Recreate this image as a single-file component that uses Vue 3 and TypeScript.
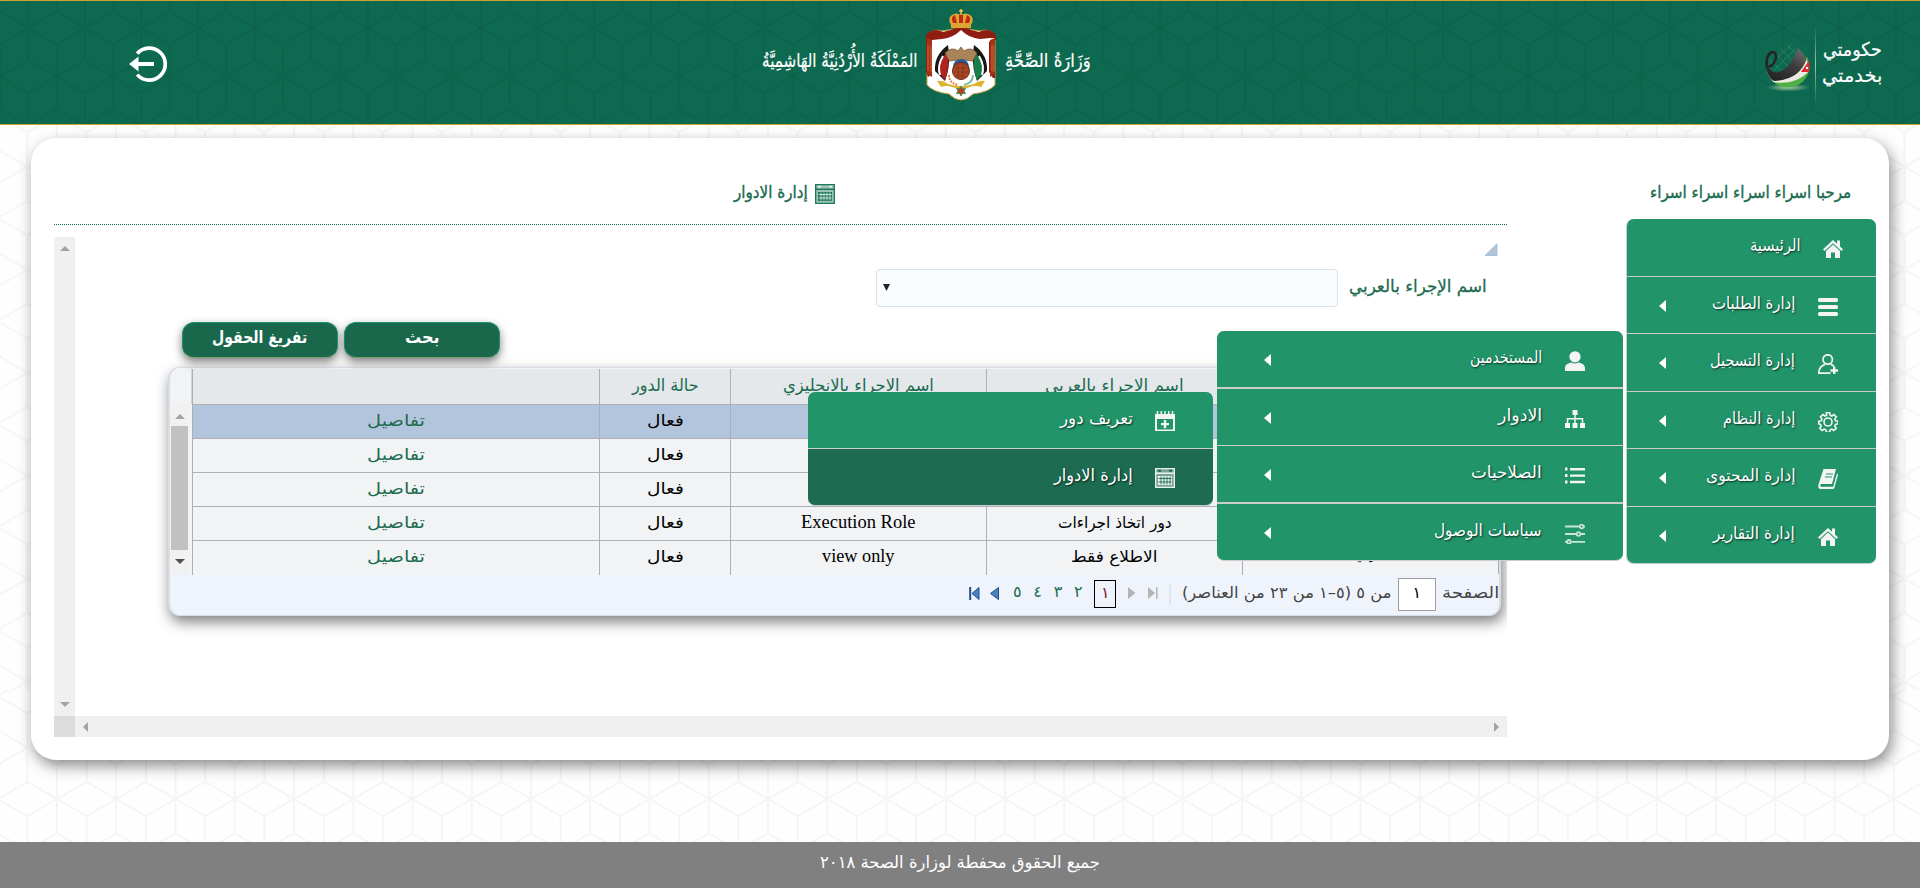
<script setup lang="ts">
import { defineComponent, h, type ObjectDirective } from 'vue'

interface MenuItem {
  label: string
  width: number
  icon: string
  arrow?: boolean
  active?: boolean
}

interface Row {
  arabic: string
  arabicWidth: number
  english: string
  englishWidth: number
  extra?: string
}

/* Condenses a label horizontally so that it takes exactly the given width. */
const vFit: ObjectDirective<HTMLElement, number> = {
  mounted(el, { value }) {
    const natural = el.offsetWidth
    if (!natural) return
    el.style.transform = `scaleX(${value / natural})`
    el.style.marginLeft = `${value - natural}px`
  },
}

const shapes: Record<string, string> = {
  home: '<path d="M10 1 0 10.3l1.5 1.6L10 4.2l8.500 7.700 1.500-1.600-3-2.800V1.500h-3v3.200z"/><path d="M10 5.600 3 12v7h5v-5.500h4V19h5v-7z"/>',
  bars: '<rect y="1" width="20" height="4" rx="1.500"/><rect y="8" width="20" height="4" rx="1.500"/><rect y="15" width="20" height="4" rx="1.500"/>',
  userAdd: '<g fill="none" stroke="#f4f4f4" stroke-width="1.700"><circle cx="9.700" cy="5.500" r="4.700"/><path d="M12.500 19.200H.8c0-5 2.500-7.500 6-8.600M12.500 10.300c1.500.5 2.800 1.300 3.800 2.500"/></g><path d="M15 13h2.400v2.300H20v2.400h-2.600V20H15v-2.300h-2.500v-2.400H15z"/>',
  gear: '<g fill="none" stroke="#f4f4f4" stroke-width="1.600"><path d="M8.300.8h3.400l.5 2.500 1.600.7 2.100-1.500 2.400 2.400-1.500 2.200.7 1.600 2.500.4v2.800l-2.500.5-.7 1.700 1.500 2.100-2.400 2.300-2.100-1.400-1.600.7-.5 2.400H8.300l-.5-2.400-1.600-.7-2.100 1.400-2.400-2.300 1.500-2.100-.7-1.700L.8 11.900V9.100l2.500-.4L4 7.100 2.500 4.900 4.900 2.500 7 4l1.600-.7z"/><circle cx="10" cy="10" r="4"/></g>',
  book: '<path d="M5.500 0H18l-4 15H3.200c-1.200 0-1.200 2.700 0 2.700h12L19 4.500c1 .3 1 1 .8 1.900L16.500 18.500q-.5 1.500-2 1.500H2.500Q0 20 .3 16z"/><path d="M8 5h7M7 8h7" stroke="#21946a" stroke-width="1.200"/>',
  user: '<circle cx="10" cy="5.800" r="5.600"/><path d="M0 20v-3c0-3 3-5 6.500-5.500q3.500 1.800 7 0C17 12 20 14 20 17v3z"/>',
  tree: '<path d="M7.500 1h5v5h-5zM0 14h5v5H0zM7.500 14h5v5h-5zM15 14h5v5h-5z"/><path d="M10 6v8M2.500 14V9.800h15V14" fill="none" stroke="#f4f4f4" stroke-width="1.500"/>',
  list: '<path d="M0 1.500h2.500v3H0zM5 2h15v2.400H5zM0 8h2.500v3H0zM5 8.400h15v2.400H5zM0 14.500h2.500v3H0zM5 14.800h15v2.400H5z"/>',
  sliders: '<g fill="none" stroke="#c9e5da" stroke-width="1.800"><path d="M0 2.500h14.500M0 10h11.500M15.500 10H20M0 17.800h2M6.500 17.800H20M18.800 2.500H20"/><circle cx="16.700" cy="2.500" r="1.800"/><circle cx="13.500" cy="10" r="1.800"/><circle cx="4" cy="17.800" r="1.800"/></g>',
  calAdd: '<path d="M0 3h20v17H0zM2 8v10.500h16V8z" fill-rule="evenodd"/><path d="M2.500 0v6M6.300 0v6M10 0v6M13.700 0v6M17.500 0v6" stroke="#f4f4f4" stroke-width="1.500"/><path d="M8.800 9h2.400v3H14v2.300h-2.800v3H8.800v-3H6V12h2.800z"/>',
}

const calendar =
  '<rect width="20" height="20" fill="FG" opacity=".45"/><path d="M0 0h20v20H0zM1.300 1.300v3.200h17.400V1.300zM1.300 6v12.700h17.400V6z" fill="FG" fill-rule="evenodd"/><path d="M3 2.800h3M14 2.800h3" stroke="BG" stroke-width="2"/><rect x="3" y="8" width="14" height="9" fill="FG"/><path d="M3.500 10.500h13M3.500 14h13M6 8.500v8M9 8.500v8M12 8.500v8M15 8.500v8" stroke="BG" stroke-width=".9"/>'
shapes.calendar = calendar.replace(/FG/g, '#e8f0ec').replace(/BG/g, '#1d6b51')
shapes.calendarGreen = calendar.replace(/FG/g, '#1f7a5a').replace(/BG/g, '#d5e9e1')

const Icon = defineComponent({
  props: { name: { type: String, required: true } },
  setup(props) {
    return () =>
      h('svg', { viewBox: '0 0 20 20', width: 20, height: 20, fill: '#f4f4f4', innerHTML: shapes[props.name] })
  },
})

const mainMenu: MenuItem[] = [
  { label: 'الرئيسية', width: 51, icon: 'home' },
  { label: 'إدارة الطلبات', width: 83, icon: 'bars', arrow: true },
  { label: 'إدارة التسجيل', width: 85, icon: 'userAdd', arrow: true },
  { label: 'إدارة النظام', width: 72, icon: 'gear', arrow: true },
  { label: 'إدارة المحتوى', width: 89, icon: 'book', arrow: true },
  { label: 'إدارة التقارير', width: 82, icon: 'home', arrow: true },
]

const systemMenu: MenuItem[] = [
  { label: 'المستخدمين', width: 72, icon: 'user', arrow: true },
  { label: 'الادوار', width: 44, icon: 'tree', arrow: true },
  { label: 'الصلاحيات', width: 71, icon: 'list', arrow: true },
  { label: 'سياسات الوصول', width: 108, icon: 'sliders', arrow: true },
]

const rolesMenu: MenuItem[] = [
  { label: 'تعريف دور', width: 73, icon: 'calAdd' },
  { label: 'إدارة الادوار', width: 79, icon: 'calendar', active: true },
]

const rows: Row[] = [
  { arabic: '', arabicWidth: 0, english: '', englishWidth: 0 },
  { arabic: '', arabicWidth: 0, english: '', englishWidth: 0 },
  { arabic: '', arabicWidth: 0, english: '', englishWidth: 0 },
  { arabic: 'دور اتخاذ اجراءات', arabicWidth: 114, english: 'Execution Role', englishWidth: 114 },
  { arabic: 'الاطلاع فقط', arabicWidth: 86, english: 'view only', englishWidth: 73, extra: 'عربي' },
]

const pages = ['٢', '٣', '٤', '٥']
</script>

<template>
  <div class="page" dir="rtl">
    <svg class="backdrop" width="1920" height="888" aria-hidden="true">
      <defs>
        <pattern id="hexTop" x="27.300" y="166.600" width="59.250" height="103" patternUnits="userSpaceOnUse">
          <path class="hex" d="M0 0 29.600 17.200 59.250 0M0 0V34.300M0 103V68.700M59.250 0V34.300M59.250 103V68.700M29.600 17.200V85.800M0 34.300 29.600 51.500 0 68.700M59.250 34.300 29.600 51.500 59.250 68.700M0 103 29.600 85.800 59.250 103" />
        </pattern>
        <pattern id="hexRight" x="1904.300" y="166.600" width="59.250" height="103" patternUnits="userSpaceOnUse">
          <path class="hex" d="M0 0 29.600 17.200 59.250 0M0 0V34.300M0 103V68.700M59.250 0V34.300M59.250 103V68.700M29.600 17.200V85.800M0 34.300 29.600 51.500 0 68.700M59.250 34.300 29.600 51.500 59.250 68.700M0 103 29.600 85.800 59.250 103" />
        </pattern>
        <pattern id="hexBottom" x="57" y="799" width="59.250" height="103" patternUnits="userSpaceOnUse">
          <path class="hex" d="M0 0 29.600 17.200 59.250 0M0 0V34.300M0 103V68.700M59.250 0V34.300M59.250 103V68.700M29.600 17.200V85.800M0 34.300 29.600 51.500 0 68.700M59.250 34.300 29.600 51.500 59.250 68.700M0 103 29.600 85.800 59.250 103" />
        </pattern>
        <pattern id="hexHeader" x="28.200" y="28" width="56.600" height="97.400" patternUnits="userSpaceOnUse">
          <path class="hex dark" d="M0 0 28.300 16.300 56.600 0M0 0V32.500M0 97.400V65M56.600 0V32.500M56.600 97.400V65M28.300 16.300V81.100M0 32.500 28.300 48.700 0 65M56.600 32.500 28.300 48.700 56.600 65M0 97.400 28.300 81.100 56.600 97.400" />
        </pattern>
      </defs>
      <rect y="125" width="1885" height="565" fill="url(#hexTop)" />
      <rect x="1885" y="125" width="35" height="565" fill="url(#hexRight)" />
      <rect y="690" width="1920" height="152" fill="url(#hexBottom)" />
      <rect width="1920" height="125" fill="#0d694f" />
      <rect width="1920" height="125" fill="url(#hexHeader)" />
    </svg>

    <header class="header">
      <div class="gov">
        <div class="gov-text">
          <div><span v-fit="59">حكومتي</span></div>
          <div><span v-fit="60">بخدمتي</span></div>
        </div>
        <div class="gov-line"></div>
        <svg class="globe" width="48" height="48" viewBox="0 0 48 48">
          <defs>
            <clipPath id="ball"><circle cx="24" cy="22" r="21.500" /></clipPath>
            <linearGradient id="coal" x1="0" y1="1" x2="1" y2="0">
              <stop offset="0" stop-color="#1c1c1c" /><stop offset=".6" stop-color="#3d3d3d" /><stop offset="1" stop-color="#777" />
            </linearGradient>
            <radialGradient id="glow"><stop offset="0" stop-color="#b5d8a8" stop-opacity=".9" /><stop offset="1" stop-color="#b5d8a8" stop-opacity="0" /></radialGradient>
          </defs>
          <ellipse cx="24" cy="43.500" rx="22" ry="4" fill="url(#glow)" />
          <g clip-path="url(#ball)">
            <path d="M12 0 42 30M20-2 46 24M6 4 36 34M2 12 24 34M36 0 8 28M42 4 14 34M28 0 4 22" stroke="#3f8a71" stroke-width=".6" fill="none" />
            <path d="M0 30Q30 34 44 12L48 48H0z" fill="#4fae45" />
            <path d="M0 28Q28 32 42 14L46 26Q32 42 8 38z" fill="#eceadf" />
            <path d="M0 12Q4 30 14 28 26 26 34 4L43 14Q36 36 10 37L-2 30z" fill="url(#coal)" />
            <path d="M46 15 37 28 47 28z" fill="#e3282b" />
          </g>
          <circle cx="43" cy="24" r="1.200" fill="#fff" />
          <path d="M3 24C1 10 8 6 11 9q3 4-2 11-3 3-5 2" fill="none" stroke="#252525" stroke-width="2.600" />
        </svg>
      </div>

      <div class="brand">
        <div class="script"><span v-fit="86">وَزَارَةُ الصِّحَّةِ</span></div>
        <svg class="emblem" width="72" height="94" viewBox="0 0 72 94">
          <path d="M2 27Q8 20 17 23L36 20 55 23Q64 20 70 27V77Q64 84 48 86 42 92 36 92 30 92 24 86 8 84 2 77z" fill="#fff" stroke="#c9a33a" />
          <path d="M1 27Q8 19 18 24 27 22 36 18 45 22 54 24 64 19 71 27V32Q66 31 64 34V64L68 70H70V30H65L55 31Q44 30 36 22 28 30 17 31L7 32V66L3 69 1 64z" fill="#8f1d12" />
          <path d="M2 30V66L7 69V32zM70 30V66L65 69V32z" fill="#a8301b" />
          <path d="M3 37v26M6 38v26M67 37v26M69 38v26" stroke="#d4783a" stroke-width=".8" />
          <path d="M23 37Q9 47 10 63l10 10Q25 60 24 45z" fill="#171717" />
          <path d="M49 37Q63 47 62 63L52 73Q47 60 48 45z" fill="#171717" />
          <path d="M22 44Q14 52 15 66l5 6Q25 60 22 44z" fill="#b32020" /><path d="M50 44Q58 52 57 66l-5 6Q47 60 50 44z" fill="#168046" />
          <path d="M18 48Q12 58 15 67M54 48Q60 58 57 67" stroke="#fff" stroke-width="2" fill="none" />
          <path d="M20 45Q27 38 33 43L36 39 39 43Q46 38 52 45L48 53 39 52 36 56 33 52 24 53z" fill="#a98458" stroke="#6c4c24" stroke-width=".7" />
          <circle cx="36" cy="59" r="8" fill="#265a9b" />
          <path d="M24 67q0 8 9 10" fill="none" stroke="#e97e3c" stroke-width="2" stroke-dasharray="2 1" /><path d="M48 67q0 8-9 10" fill="none" stroke="#80bd9b" stroke-width="2" />
          <circle cx="36" cy="63" r="8.500" fill="#a84724" stroke="#6d2514" />
          <path d="M30 60h12M29 64h14M32 68h8M33 56v14M38 56v14" stroke="#7b2b14" stroke-width=".6" />
          <path d="M12 73Q18 72 23 76 36 80 49 76 54 72 60 73L56 79Q50 77 45 79 36 82 27 79 22 77 16 79z" fill="#dcb52e" />
          <path d="M36 88l1.500 2.500h3L39 93l1.500 2.500h-3L36 98l-1.500-2.500h-3L33 93l-1.500-2.500h3z" fill="#b54125" stroke="#3b9d5c" transform="translate(0 -10)" />
          <path d="M26 17Q22 10 27 7 31 4 36 7 41 4 45 7 50 10 46 17z" fill="#e2a431" />
          <path d="M28 15Q25 9 30 7l2 8zM34 15V7h4v8zM44 15Q47 9 42 7l-2 8z" fill="#c02b17" />
          <path d="M26 16h20v4H26z" fill="#dda630" /><path d="M36 1v6M34 3h4" stroke="#f0c64e" stroke-width="1.500" />
        </svg>
        <div class="script"><span v-fit="155">المَمْلَكَةُ الأُرْدُنِيَّةُ الهَاشِمِيَّةُ</span></div>
      </div>

      <svg class="logout" width="40" height="40" viewBox="0 0 40 40">
        <path d="M8.200 8.600A16 16 0 1 1 8.200 29.600" fill="none" stroke="#fff" stroke-width="3.700" />
        <path d="M0 19 9.500 11.500V17H25V21H9.500V26.500z" fill="#fff" />
      </svg>
    </header>

    <main class="card">
      <aside class="side">
        <div class="welcome"><span v-fit="201">مرحبا اسراء اسراء اسراء اسراء</span></div>
        <nav class="menu main-menu">
          <a v-for="item in mainMenu" :key="item.label" class="item" :class="{ leaf: !item.arrow }">
            <Icon class="item-icon" :name="item.icon" />
            <b class="item-label"><span v-fit="item.width">{{ item.label }}</span></b>
            <i v-if="item.arrow" class="caret"></i>
          </a>
        </nav>
      </aside>

      <section class="content">
        <h1 class="title">
          <Icon name="calendarGreen" />
          <span v-fit="74">إدارة الادوار</span>
        </h1>

        <div class="frame">
          <div class="vbar"><i class="up"></i><i class="down"></i></div>
          <div class="view">
            <svg class="corner" width="14" height="14" viewBox="0 0 14 14"><path d="M13 .8V12.500H1z" fill="#b5c4d4" stroke="#a2c1e0" /></svg>
            <div class="filter">
              <label><span v-fit="138">اسم الإجراء بالعربي</span></label>
              <div class="select"><svg width="8" height="8"><path d="M0 0h7L3.500 7z" fill="#222" /></svg></div>
            </div>
            <div class="actions">
              <button type="button"><span v-fit="35">بحث</span></button>
              <button type="button"><span v-fit="95">تفريغ الحقول</span></button>
            </div>

            <div class="grid">
              <div class="grid-body">
                <div class="cells">
                  <div class="tr head">
                    <div></div>
                    <div><span v-fit="139">اسم الاجراء بالعربي</span></div>
                    <div><span v-fit="151">اسم الاجراء بالانجليزي</span></div>
                    <div><span v-fit="67">حالة الدور</span></div>
                    <div></div>
                  </div>
                  <div v-for="(row, index) in rows" :key="index" class="tr" :class="{ selected: index === 0 }">
                    <div class="extra"><span v-if="row.extra" v-fit="30">{{ row.extra }}</span></div>
                    <div><span v-if="row.arabic" v-fit="row.arabicWidth">{{ row.arabic }}</span></div>
                    <div class="latin"><span v-if="row.english" v-fit="row.englishWidth">{{ row.english }}</span></div>
                    <div><span v-fit="37">فعال</span></div>
                    <div class="link"><span v-fit="58">تفاصيل</span></div>
                  </div>
                </div>
                <div class="grid-bar">
                  <div class="grid-bar-head"></div>
                  <div class="track"><i class="up"></i><i class="thumb"></i><i class="down dark"></i></div>
                </div>
              </div>
              <div class="pager">
                <span v-fit="57">الصفحة</span>
                <div class="page-input">١</div>
                <span v-fit="209">من ٥ (٥–١ من ٢٣ من العناصر)</span>
                <i class="divider"></i>
                <svg class="last" width="10" height="12"><path d="M0 0 7 6 0 12zM8 0h1.500v12H8z" fill="#b4b4b4" /></svg>
                <svg class="next" width="8" height="12"><path d="M0 0 7.500 6 0 12z" fill="#b4b4b4" /></svg>
                <div class="current">١</div>
                <a v-for="p in pages" :key="p" class="num">{{ p }}</a>
                <svg class="prev" width="9" height="13"><path d="M8.500.5v12L.5 6.500z" fill="#4b82bd" stroke="#1d4f8c" /></svg>
                <svg class="first" width="11" height="13"><path d="M10 .5v12L3 6.500z" fill="#4b82bd" stroke="#1d4f8c" /><path d="M1.200 0v13" stroke="#1d4f8c" stroke-width="2" /></svg>
              </div>
            </div>
          </div>
          <div class="resizer"></div>
          <div class="hbar"><i class="right"></i><i class="left"></i></div>
        </div>
      </section>
    </main>

    <nav class="menu flyout system-menu">
      <a v-for="item in systemMenu" :key="item.label" class="item">
        <Icon class="item-icon" :name="item.icon" />
        <b class="item-label"><span v-fit="item.width">{{ item.label }}</span></b>
        <i class="caret"></i>
      </a>
    </nav>
    <nav class="menu flyout roles-menu">
      <a v-for="item in rolesMenu" :key="item.label" class="item" :class="{ active: item.active }">
        <Icon class="item-icon" :name="item.icon" />
        <b class="item-label"><span v-fit="item.width">{{ item.label }}</span></b>
      </a>
    </nav>

    <footer class="footer"><span v-fit="280">جميع الحقوق محفطة لوزارة الصحة ٢٠١٨</span></footer>
  </div>
</template>

<style>
html,
body {
  margin: 0;
  overflow: hidden;
  background: #fefefe;
}
</style>

<style scoped>
* {
  box-sizing: border-box;
}
.page {
  position: relative;
  display: flex;
  flex-direction: column;
  height: 888px;
  font: 16px/24px 'DejaVu Sans', 'Noto Sans', sans-serif;
  color: #000;
}
span {
  display: inline-block;
  flex-shrink: 0;
  white-space: nowrap;
  transform-origin: right center;
}
svg {
  display: block;
  flex-shrink: 0;
}
.backdrop {
  position: absolute;
  inset: 0;
}
.hex {
  fill: none;
  stroke: #f5f5f5;
  stroke-width: 2;
}
.hex.dark {
  stroke: #0d634b;
}

.header {
  position: relative;
  display: flex;
  justify-content: space-between;
  height: 125px;
  border-top: 1px solid #cda32e;
  border-bottom: 1px solid #cda32e;
  color: #fff;
}
.gov {
  display: flex;
  width: 400px;
  padding-right: 38px;
}
.gov-text {
  width: 60px;
  padding-top: 35px;
  font-size: 19px;
  line-height: 26px;
  -webkit-text-stroke: 0.2px #fff;
}
.gov-line {
  width: 1px;
  height: 80px;
  margin: 24px 6px 0 3px;
  background: linear-gradient(transparent, #9cc4b6 50%, transparent);
}
.globe {
  margin-top: 43px;
}
.brand {
  display: flex;
  align-items: flex-start;
  margin-left: -66px;
}
.script {
  padding-top: 45px;
  font-size: 19px;
  line-height: 28px;
  -webkit-text-stroke: 0.2px #fff;
}
.emblem {
  margin: 7px 8px 0;
}
.logout {
  margin: 44px 230px 0 129px;
}

.card {
  position: relative;
  display: flex;
  width: 1858px;
  height: 622px;
  margin: 13px 31px 0;
  background: #fff;
  border-radius: 25px;
  box-shadow: 3px 6px 15px rgba(0, 0, 0, 0.45);
}
.side {
  width: 263px;
  padding: 42px 13px 0 0;
}
.welcome {
  height: 39px;
  padding-right: 25px;
  color: #1b6b4f;
  font-size: 17px;
  -webkit-text-stroke: 0.4px #1b6b4f;
}
.menu {
  background: #ccc;
  border-radius: 7px;
}
.main-menu {
  width: 250px;
  padding-left: 1px;
  border-bottom: 1px solid #ccc;
}
.item {
  display: flex;
  height: 57.500px;
  padding-right: 38px;
  border-bottom: 1px solid #ccc;
  background: #21946a;
  color: #fff;
}
.item:first-child {
  border-radius: 7px 7px 0 0;
}
.item:last-child {
  height: 56px;
  border-bottom: 0;
  border-radius: 0 0 7px 7px;
}
.item.leaf {
  padding-right: 33px;
}
.item.active {
  background: #1d6b51;
}
.item-icon {
  margin-top: 20px;
}
.item-label {
  flex: 1;
  padding: 14px 23px 0 0;
  font-weight: 400;
  font-size: 17px;
  text-shadow: 1px 1px 2px rgba(0, 0, 0, 0.7);
}
.leaf .item-label {
  padding-right: 22px;
}
.caret {
  width: 0;
  height: 0;
  margin: 23px 0 0 32px;
  border: 6px solid transparent;
  border-right: 7px solid #fff;
  border-left: 0;
}
.flyout {
  position: absolute;
  border-bottom: 1px solid #ccc;
}
.system-menu {
  left: 1217px;
  top: 331px;
  width: 406px;
}
.system-menu .caret {
  margin-left: 47px;
}
.system-menu .item:nth-child(odd) {
  border-bottom-width: 2px;
}
.roles-menu {
  left: 808px;
  top: 392px;
  width: 405px;
}
.roles-menu .item:first-child {
  height: 57px;
}
.roles-menu .item-icon {
  margin-top: 19px;
}
.roles-menu .item-label {
  padding-right: 22px;
}

.content {
  width: 1453px;
  margin-right: 119px;
}
.title {
  display: flex;
  gap: 7px;
  height: 87px;
  margin: 0;
  padding: 42px 672px 0 0;
  border-bottom: 1px dotted #0d694f;
  color: #1b6b4f;
  font-weight: 400;
  font-size: 17px;
  -webkit-text-stroke: 0.4px #1b6b4f;
}
.title svg {
  margin-top: 4px;
  -webkit-text-stroke: 0;
}
.frame {
  display: grid;
  grid-template: 479px 21px / 1432px 21px;
  height: 500px;
  margin-top: 12px;
}
.view {
  grid-area: 1 / 1;
  padding-right: 6px;
  overflow: hidden;
}
.vbar {
  grid-area: 1 / 2;
  display: flex;
  flex-direction: column;
  justify-content: space-between;
  align-items: center;
  padding: 9px 0;
  background: #f0f0f0;
}
.hbar {
  grid-area: 2 / 1;
  display: flex;
  justify-content: space-between;
  align-items: center;
  padding: 0 8px;
  background: #f0f0f0;
}
.resizer {
  grid-area: 2 / 2;
  background: #dcdcdc;
}
.up,
.down,
.left,
.right {
  width: 0;
  height: 0;
  border: 5px solid transparent;
}
.up {
  border-top: 0;
  border-bottom-color: #a3a3a3;
}
.down {
  border-bottom: 0;
  border-top-color: #a3a3a3;
}
.down.dark {
  border-top-color: #505050;
}
.left {
  border-left: 0;
  border-right-color: #a3a3a3;
}
.right {
  border-right: 0;
  border-left-color: #a3a3a3;
}
.corner {
  margin: 6px 3px 0 0;
}
.filter {
  display: flex;
  gap: 11px;
  padding: 12px 14px 0 0;
}
.filter label {
  padding-top: 5px;
  color: #1b6b4f;
  font-size: 17px;
  -webkit-text-stroke: 0.3px #1b6b4f;
}
.select {
  display: flex;
  justify-content: flex-end;
  align-items: center;
  width: 462px;
  height: 38px;
  padding-left: 6px;
  border: 1px solid #dbe2e8;
  border-radius: 4px;
  background: #f9fdff;
}
.actions {
  display: flex;
  gap: 6px;
  justify-content: flex-end;
  padding: 15px 0 0 107px;
}
.actions button {
  width: 156px;
  height: 36px;
  padding: 0 0 6px;
  border: 1px solid #21946a;
  border-bottom-color: #7c9c70;
  border-radius: 12px;
  background: #1a684c;
  box-shadow: 0 4px 10px rgba(0, 0, 0, 0.5);
  color: #fff;
  font: bold 17px/24px 'DejaVu Sans', sans-serif;
}
.grid {
  width: 1333px;
  height: 249px;
  margin-top: 9px;
  border: 2px solid #d5dde6;
  border-top-width: 1px;
  border-bottom-width: 1px;
  border-radius: 12px;
  background: #eff3fb;
  box-shadow: 2px 6px 14px rgba(0, 0, 0, 0.5);
  overflow: hidden;
}
.grid-body {
  display: flex;
  height: 206px;
  padding-top: 1px;
  background: #f1f3f5;
}
.cells {
  width: 1307px;
  border-right: 1px solid #aeb0b4;
}
.tr {
  display: grid;
  grid-template-columns: 256px 256px 256px 131px 407px;
  height: 34px;
  border-bottom: 1px solid #aeb0b4;
  background: #f1f3f5;
  line-height: 32px;
  text-align: center;
}
.tr > div {
  border-left: 1px solid #aeb0b4;
}
.tr:last-child {
  border-bottom: 0;
}
.tr span {
  line-height: 32px;
}
.tr .extra,
.tr .extra span {
  line-height: 23px;
}
.head {
  height: 36px;
  background: #e4e8eb;
  color: #1b6b4f;
  font-size: 17px;
}
.head span {
  line-height: 33px;
}
.selected {
  background: #b3c5dc;
}
.latin {
  font-family: 'Liberation Serif', serif;
  font-size: 18px;
  direction: ltr;
}
.latin,
.latin span {
  line-height: 30px;
}
.link {
  color: #1b6b4f;
}
.grid-bar {
  flex: 1;
}
.grid-bar-head {
  height: 35px;
  border-right: 1px solid #d2d5d8;
}
.track {
  display: flex;
  flex-direction: column;
  align-items: center;
  width: 17px;
  height: 170px;
  margin-right: 4px;
  padding-top: 10px;
  background: #f1f1f1;
}
.thumb {
  width: 17px;
  height: 124px;
  margin: 7px 0 9px;
  background: #c1c1c1;
}
.pager {
  display: flex;
  height: 41px;
  padding: 6px 0 0 0;
  color: #444;
}
.pager span {
  line-height: 26px;
}
.page-input {
  width: 38px;
  height: 33px;
  margin: -2px 6px 0 6px;
  border: 1px solid #a0a0a0;
  background: #fff;
  color: #000;
  line-height: 28px;
  text-align: center;
}
.divider {
  width: 2px;
  height: 22px;
  margin: 3px 11px 0 11px;
  background: #dde5ee;
}
.last {
  margin: 7px 0 0 12px;
}
.next {
  margin: 7px 0 0 12px;
}
.current {
  width: 22px;
  height: 28px;
  margin-left: 6px;
  border: 1px solid #000;
  color: #7a1c1c;
  line-height: 24px;
  text-align: center;
}
.num {
  width: 20.300px;
  color: #1b6b4f;
  text-align: center;
}
.prev {
  margin: 7px 8px 0 10px;
}
.first {
  margin-top: 7px;
}

.footer {
  position: relative;
  height: 46px;
  margin-top: auto;
  padding-top: 8px;
  background: #808080;
  color: #fff;
  font-size: 17px;
  text-align: center;
}
</style>
